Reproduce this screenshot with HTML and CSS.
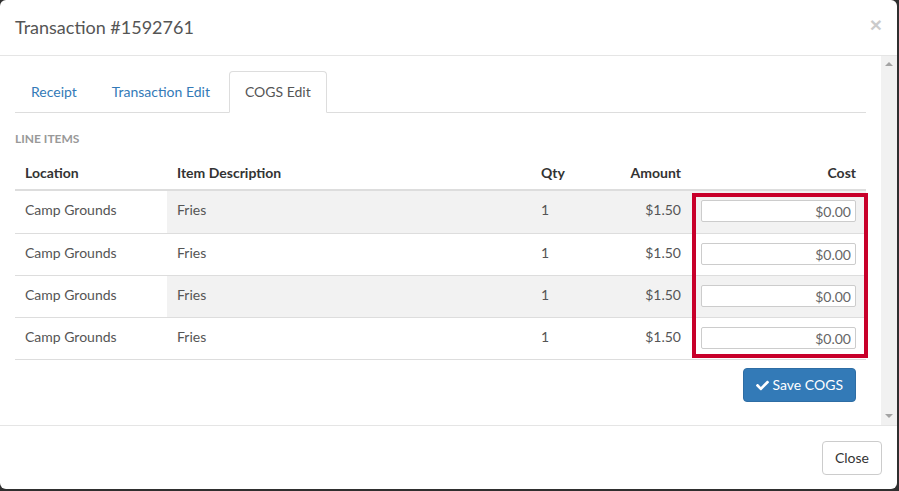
FILE: index.html
```html
<!DOCTYPE html>
<html>
<head>
<meta charset="utf-8">
<link rel="stylesheet" href="styles.css">
</head>
<body>
<div class="modal">
  <div class="modal-header">
    <h4 class="modal-title">Transaction #1592761</h4>
    <span class="close">&times;</span>
  </div>
  <div class="modal-body-wrap">
    <div class="modal-body">
      <ul class="nav-tabs">
        <li><a>Receipt</a></li>
        <li><a>Transaction Edit</a></li>
        <li class="active"><a>COGS Edit</a></li>
      </ul>
      <div class="section-label">LINE ITEMS</div>
      <div class="table-wrap">
        <table class="items">
          <colgroup>
            <col class="c-loc"><col class="c-desc"><col class="c-qty"><col class="c-amt"><col class="c-cost">
          </colgroup>
          <thead>
            <tr><th>Location</th><th>Item Description</th><th>Qty</th><th class="r">Amount</th><th class="r">Cost</th></tr>
          </thead>
          <tbody>
            <tr class="odd"><td class="loc">Camp Grounds</td><td>Fries</td><td>1</td><td class="r">$1.50</td><td class="r"><input class="cost" value="$0.00"></td></tr>
            <tr><td class="loc">Camp Grounds</td><td>Fries</td><td>1</td><td class="r">$1.50</td><td class="r"><input class="cost" value="$0.00"></td></tr>
            <tr class="odd"><td class="loc">Camp Grounds</td><td>Fries</td><td>1</td><td class="r">$1.50</td><td class="r"><input class="cost" value="$0.00"></td></tr>
            <tr><td class="loc">Camp Grounds</td><td>Fries</td><td>1</td><td class="r">$1.50</td><td class="r"><input class="cost" value="$0.00"></td></tr>
          </tbody>
        </table>
        <div class="highlight"></div>
      </div>
      <div class="actions">
        <button class="btn-primary"><svg class="check" viewBox="0 0 512 512"><path fill="#fff" d="M173.898 439.404l-166.4-166.4c-9.997-9.997-9.997-26.206 0-36.204l36.203-36.204c9.997-9.998 26.207-9.998 36.204 0L192 312.69 432.095 72.596c9.997-9.997 26.207-9.997 36.204 0l36.203 36.204c9.997 9.997 9.997 26.206 0 36.204l-294.4 294.401c-9.998 9.997-26.207 9.997-36.204-.001z"/></svg>Save COGS</button>
      </div>
    </div>
    <div class="scrollbar">
      <span class="arrow up"></span>
      <span class="arrow down"></span>
    </div>
  </div>
  <div class="modal-footer">
    <button class="btn-default">Close</button>
  </div>
</div>
</body>
</html>
```

FILE: styles.css
```css
html, body {
  margin: 0;
  padding: 0;
}
body {
  background: #2f2f2f;
  width: 899px;
  height: 491px;
  overflow: hidden;
  font-family: Lato, "Open Sans", "Liberation Sans", sans-serif;
  font-size: 14px;
  color: #555;
}
.modal {
  width: 897px;
  height: 489px;
  background: #fff;
  border-radius: 6px;
  display: flex;
  flex-direction: column;
  overflow: hidden;
}
.modal-header {
  height: 55px;
  border-bottom: 1px solid #e5e5e5;
  display: flex;
  align-items: center;
  justify-content: space-between;
  padding: 0 15px;
}
.modal-title {
  margin: 0;
  font-size: 18px;
  font-weight: normal;
  color: #555;
  line-height: 24px;
  padding-bottom: 2px;
}
.close {
  font-family: "Liberation Sans", Arial, sans-serif;
  font-size: 21px;
  font-weight: bold;
  color: #000;
  opacity: 0.2;
  line-height: 1;
  margin-top: -6px;
}
.modal-body-wrap {
  height: 369px;
  display: flex;
  overflow: hidden;
}
.modal-body {
  width: 851px;
  padding: 15px;
  flex: none;
}
.scrollbar {
  width: 16px;
  background: #f1f1f1;
  display: flex;
  flex-direction: column;
  justify-content: space-between;
  align-items: center;
  padding: 6px 0 7px;
  box-sizing: border-box;
}
.arrow {
  width: 0;
  height: 0;
  border-left: 4px solid transparent;
  border-right: 4px solid transparent;
}
.arrow.up { border-bottom: 4px solid #a3a3a3; }
.arrow.down { border-top: 4px solid #a3a3a3; }

.nav-tabs {
  list-style: none;
  margin: 0;
  padding: 0;
  display: flex;
  border-bottom: 1px solid #ddd;
}
.nav-tabs li {
  margin-right: 3px;
  margin-bottom: -1px;
}
.nav-tabs a {
  display: block;
  padding: 10px 15px;
  line-height: 20px;
  color: #337ab7;
  border: 1px solid transparent;
  border-radius: 4px 4px 0 0;
}
.nav-tabs li.active a {
  color: #555;
  background: #fff;
  border-color: #ddd #ddd transparent;
}
.section-label {
  font-size: 12px;
  font-weight: bold;
  color: #999;
  margin-top: 19px;
  line-height: 14px;
}
.table-wrap {
  position: relative;
  margin-top: 7px;
}
.items {
  width: 851px;
  border-collapse: separate;
  border-spacing: 0;
  table-layout: fixed;
}
.c-loc { width: 152px; }
.c-desc { width: 364px; }
.c-qty { width: 80px; }
.c-amt { width: 80px; }
.c-cost { width: 175px; }
.items th {
  text-align: left;
  font-weight: bold;
  color: #333;
  padding: 10px 10px 6px;
  line-height: 20px;
  border-bottom: 2px solid #ddd;
}
.items td {
  padding: 9px 10px 0;
  height: 42px;
  box-sizing: border-box;
  line-height: 20px;
  border-top: 1px solid #ddd;
  color: #555;
  vertical-align: top;
}
.items tbody tr:first-child td {
  border-top: 0;
  height: 42px;
}
.items tbody tr:last-child td {
  border-bottom: 1px solid #ddd;
  height: 43px;
}
.items tr.odd td { background: #f2f2f2; }
.items tr.odd td.loc { background: #fff; }
.items .r { text-align: right; }
.cost {
  width: 155px;
  height: 22px;
  box-sizing: border-box;
  border: 1px solid #ccc;
  border-radius: 2px;
  text-align: right;
  font-family: Lato, "Open Sans", sans-serif;
  font-size: 14px;
  color: #666;
  padding: 0 4px;
  margin: 0;
  display: block;
  background: #fff;
}
.highlight {
  position: absolute;
  left: 677px;
  top: 40px;
  width: 176px;
  height: 165px;
  box-sizing: border-box;
  border: 4px solid #c8002a;
  pointer-events: none;
}
.actions {
  display: flex;
  justify-content: flex-end;
  padding-right: 10px;
  margin-top: 8px;
}
.btn-primary {
  background: #337ab7;
  border: 1px solid #2e6da4;
  border-radius: 4px;
  color: #fff;
  font-family: Lato, "Open Sans", sans-serif;
  font-size: 14px;
  line-height: 20px;
  padding: 6px 12px;
  display: flex;
  align-items: center;
  height: 34px;
  box-sizing: border-box;
}
.check {
  width: 13px;
  height: 13px;
  margin-right: 4px;
}
.modal-footer {
  border-top: 1px solid #e5e5e5;
  flex: 1;
  display: flex;
  justify-content: flex-end;
  align-items: flex-start;
  padding: 15px 15px 0;
}
.btn-default {
  background: #fff;
  border: 1px solid #ccc;
  border-radius: 4px;
  color: #333;
  font-family: Lato, "Open Sans", sans-serif;
  font-size: 14px;
  line-height: 20px;
  padding: 6px 12px;
  height: 34px;
  box-sizing: border-box;
}
```
